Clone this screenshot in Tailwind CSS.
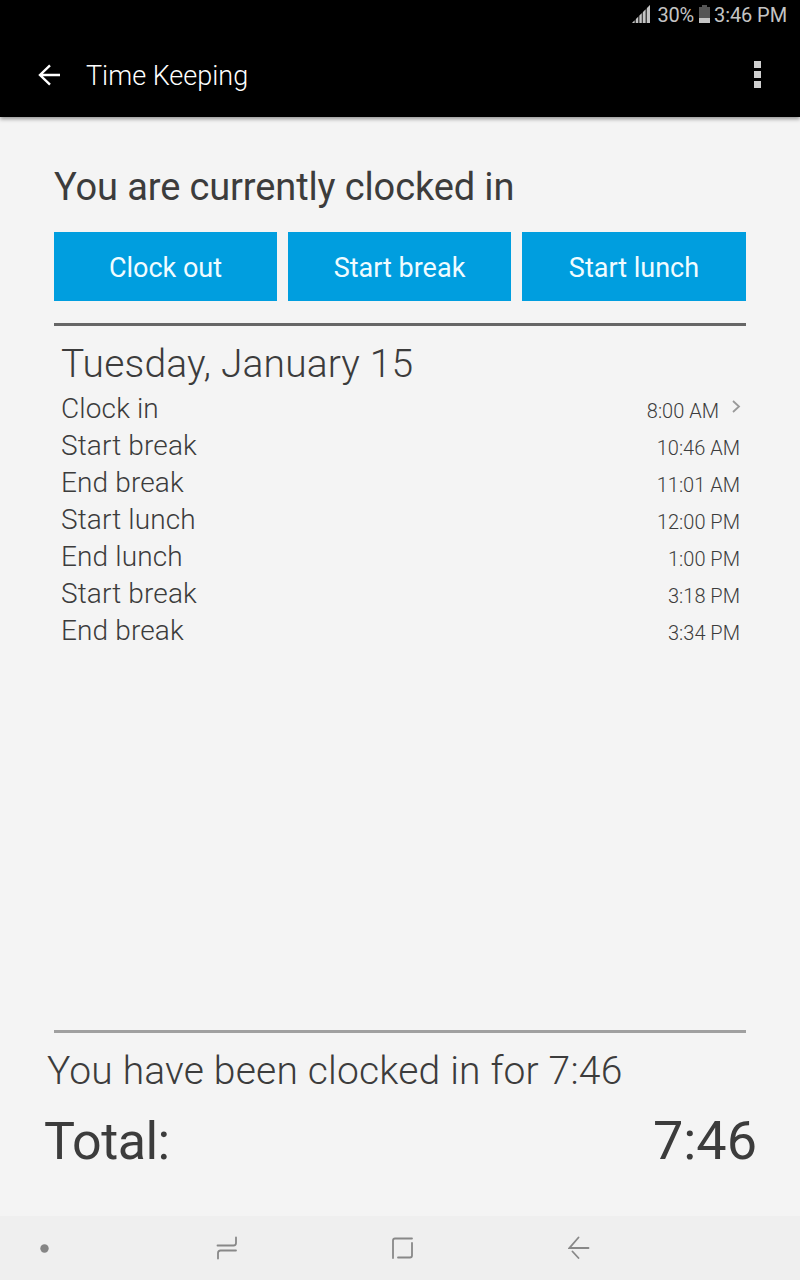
<!DOCTYPE html>
<html lang="en">
<head>
<meta charset="utf-8">
<title>Time Keeping</title>
<script src="https://cdn.jsdelivr.net/npm/@tailwindcss/browser@4"></script>
</head>
<body class="w-[800px] h-[1280px] overflow-hidden bg-[#f4f4f4] font-['Roboto',sans-serif] text-[#3c3c3c] flex flex-col whitespace-nowrap">
  <header class="h-[117px] shrink-0 bg-black text-white flex flex-col shadow-[0_2px_4px_rgba(0,0,0,0.4)]">
    <div class="h-[33px] flex items-start justify-end pt-[3px] pr-[13px] text-[20px] leading-[24px] text-[#c4c4c4]">
      <svg class="mt-[2px] mr-[7px]" width="18" height="18" viewBox="0 0 18 18" fill="#c4c4c4"><path fill="#444" d="M0 18L18 0v18z"/><path d="M0 18l2.500-2.500V18zM4 14l2-2v6H4zM7.500 10.500l2.200-2.200V18H7.500zM11 7l2.500-2.500V18H11zM15 3l3-3v18h-3z"/></svg>
      <span class="tracking-[-0.15px]">30%</span>
      <svg class="mt-[2px] ml-[5px] mr-[4px]" width="11" height="18" viewBox="0 0 11 18"><path fill="#555" d="M3 0h5v2h3v16H0V2h3z"/><path fill="#c4c4c4" d="M0 13h11v5H0z"/></svg>
      <span class="tracking-[-0.1px]">3:46 PM</span>
    </div>
    <div class="h-[84px] flex items-center pl-[38px] pr-[39px]">
      <svg width="22" height="22" viewBox="0 0 22 22" fill="none" stroke="#fff" stroke-width="2.400"><path d="M22 11H2M12 1.300L2 11l10 9.700"/></svg>
      <h1 class="ml-[26px] mt-[2px] text-[27px] font-light grow">Time Keeping</h1>
      <svg width="7" height="28" viewBox="0 0 7 28" fill="#d0d0d0"><path d="M0 0h7v7H0zM0 10h7v7H0zM0 20h7v7H0z"/></svg>
    </div>
  </header>
  <main class="grow flex flex-col px-[54px]">
    <h2 class="mt-[45px] h-[48px] leading-[50px] text-[38px] tracking-[-0.12px]">You are currently clocked in</h2>
    <div class="mt-[22px] h-[69px] grid grid-cols-[223px_223px_224px] gap-[11px] text-[27px] text-[#f0fcff]">
      <button class="bg-[#009edf] pt-[3px]">Clock out</button>
      <button class="bg-[#009edf] pt-[3px]">Start break</button>
      <button class="bg-[#009edf] pt-[3px]">Start lunch</button>
    </div>
    <section class="mt-[22px] border-t-[3px] border-[#666] pl-[7px] pr-[6px]">
      <h3 class="mt-[13px] h-[48px] leading-[50px] text-[39px] font-light tracking-[0.14px]">Tuesday, January 15</h3>
      <ul class="mt-[3px] text-[28px] font-light leading-[37px] tracking-[0.13px]">
        <li class="h-[37px] flex justify-between"><span>Clock in</span><span class="flex text-[20px] pt-[3px] tracking-normal">8:00 AM<svg class="mt-[7px] ml-[13px] -mr-px" width="9" height="13" viewBox="0 0 9 13" fill="none" stroke="#999" stroke-width="1.800"><path d="M1 1l6 5.500L1 12"/></svg></span></li>
        <li class="h-[37px] flex justify-between"><span>Start break</span><span class="text-[20px] pt-[3px] tracking-normal">10:46 AM</span></li>
        <li class="h-[37px] flex justify-between"><span>End break</span><span class="text-[20px] pt-[3px] tracking-normal">11:01 AM</span></li>
        <li class="h-[37px] flex justify-between"><span>Start lunch</span><span class="text-[20px] pt-[3px] tracking-normal">12:00 PM</span></li>
        <li class="h-[37px] flex justify-between"><span>End lunch</span><span class="text-[20px] pt-[3px] tracking-normal">1:00 PM</span></li>
        <li class="h-[37px] flex justify-between"><span>Start break</span><span class="text-[20px] pt-[3px] tracking-normal">3:18 PM</span></li>
        <li class="h-[37px] flex justify-between"><span>End break</span><span class="text-[20px] pt-[3px] tracking-normal">3:34 PM</span></li>
      </ul>
    </section>
    <section class="mt-auto h-[186px] border-t-[3px] border-[#a0a0a0]">
      <p class="-ml-[7px] mt-[14px] h-[48px] leading-[48px] text-[39px] font-light tracking-[0.19px]">You have been clocked in for 7:46</p>
      <div class="-ml-[10px] -mr-[11px] mt-[14px] flex justify-between items-baseline leading-[64px]"><span class="text-[52px] tracking-[-0.5px]">Total:</span><span class="text-[54px]">7:46</span></div>
    </section>
  </main>
  <nav class="h-[64px] shrink-0 bg-[#efefef] flex items-center pl-[40px]">
    <svg width="9" height="9" viewBox="0 0 9 9"><circle cx="4.500" cy="4.500" r="4.200" fill="#858585"/></svg>
    <svg class="ml-[167px]" width="22" height="24" viewBox="0 0 22 24" fill="none" stroke="#888" stroke-width="1.800" stroke-linecap="round"><path d="M1.500 9.500H17.500Q20 9.500 20 7V1.500M20 14.500H4.500Q2 14.500 2 17V22.500"/></svg>
    <svg class="ml-[153px]" width="22" height="22" viewBox="0 0 22 22" fill="none" stroke="#888" stroke-width="1.800" stroke-linecap="round"><path d="M21 1.500H4Q2 1.500 2 3.500V21M21 6V18.500Q21 20.500 19 20.500H7"/></svg>
    <svg class="ml-[155px]" width="22" height="24" viewBox="0 0 22 24" fill="none" stroke="#888" stroke-width="1.800" stroke-linecap="round"><path d="M20.500 12H1.500L10.500 1.500M4.500 15.500L10.500 22"/></svg>
  </nav>
</body>
</html>
